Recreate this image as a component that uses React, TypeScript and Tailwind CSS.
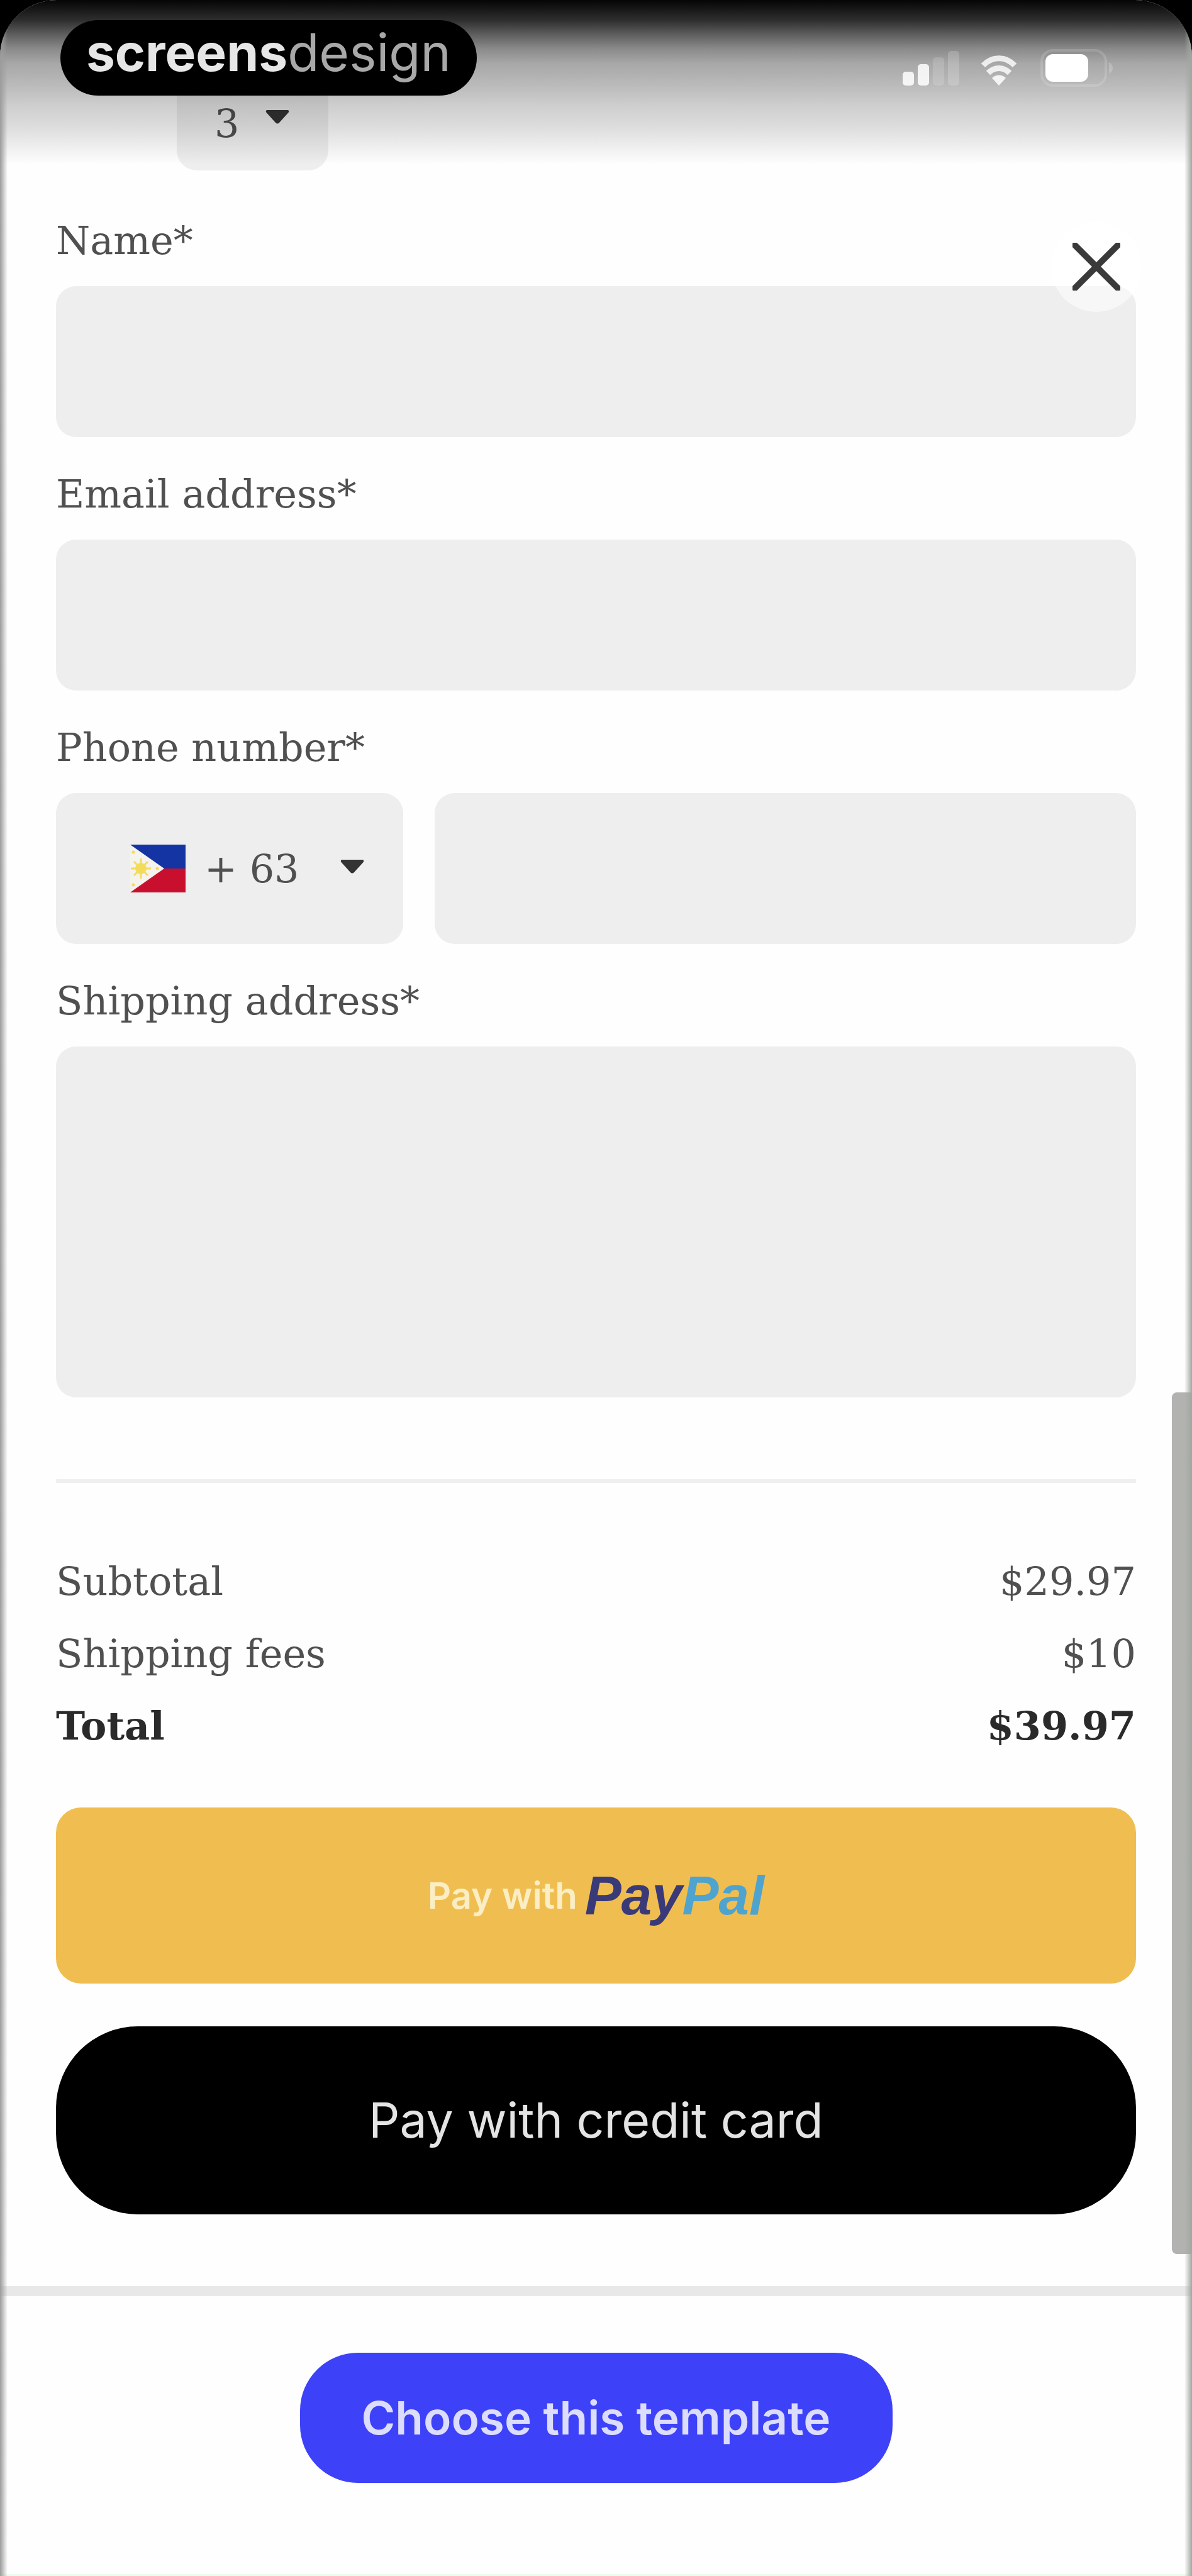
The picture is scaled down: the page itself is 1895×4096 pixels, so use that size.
import type { ReactNode } from "react";

const TEXT_FIELDS = [
  { id: "name", label: "Name*", type: "text" },
  { id: "email", label: "Email address*", type: "email" },
];

const TOTALS = [
  { label: "Subtotal", value: "$29.97", bold: false },
  { label: "Shipping fees", value: "$10", bold: false },
  { label: "Total", value: "$39.97", bold: true },
];

const FIELD = "block h-[240px] w-full rounded-[32px] bg-[#eeeeee] px-12 outline-none";

function Caret({ className }: { className: string }) {
  return (
    <svg viewBox="0 0 38 24" className={className} aria-hidden="true">
      <path d="M3 1h32c2 0 3 2 1.500 4L22 21c-2 2-4 2-6 0L1.500 5C0 3 1 1 3 1z" fill="#333333" />
    </svg>
  );
}

function PhFlag({ className }: { className: string }) {
  return (
    <svg viewBox="0 0 88 76" className={className} aria-hidden="true">
      <rect width="88" height="38" fill="#1434a4" />
      <rect y="38" width="88" height="38" fill="#c8102e" />
      <path d="M0 0l54 38L0 76z" fill="#f4f3ee" />
      <circle cx="17" cy="38" r="9" fill="#f3dc5c" />
      <g stroke="#f3dc5c" strokeWidth="3">
        <path d="M17 22v32M1 38h32M6 27l22 22M6 49l22-22" />
      </g>
      <circle cx="5" cy="12" r="2.500" fill="#f3dc5c" />
      <circle cx="5" cy="64" r="2.500" fill="#f3dc5c" />
      <circle cx="43" cy="38" r="2.500" fill="#f3dc5c" />
    </svg>
  );
}

function StatusIcons() {
  return (
    <svg viewBox="0 0 344 64" className="h-16 w-[344px]" aria-hidden="true">
      {/* signal */}
      <rect x="2" y="36" width="18" height="22" rx="5" fill="#fff" fillOpacity="0.85" />
      <rect x="26" y="24" width="18" height="34" rx="5" fill="#fff" fillOpacity="0.85" />
      <rect x="50" y="13" width="18" height="45" rx="5" fill="#fff" fillOpacity="0.15" />
      <rect x="74" y="3" width="18" height="55" rx="5" fill="#fff" fillOpacity="0.18" />
      {/* wifi */}
      <g fill="none" stroke="#fff" strokeOpacity="0.8" strokeWidth="9">
        <path d="M130 26c14-15 36-15 50 0" />
        <path d="M138 38c10-10 24-10 34 0" />
      </g>
      <path d="M155 58l-11-12c6-6 16-6 22 0z" fill="#fff" fillOpacity="0.85" />
      {/* battery */}
      <rect x="223" y="2" width="102" height="56" rx="18" fill="none" stroke="#fff" strokeOpacity="0.15" strokeWidth="4" />
      <rect x="229" y="8" width="68" height="44" rx="12" fill="#fff" />
      <path d="M330 21c8 3 8 15 0 18z" fill="#fff" fillOpacity="0.2" />
    </svg>
  );
}

function Field({ id, label, children }: { id: string; label: string; children: ReactNode }) {
  return (
    <div className="mb-[43px] flex flex-col gap-6">
      <label htmlFor={id} className="block self-start leading-[96px]">
        {label}
      </label>
      {children}
    </div>
  );
}

export default function App() {
  return (
    <div className="bg-black">
      <div className="relative overflow-hidden rounded-t-[90px] bg-[#fefefe] font-['DejaVu_Serif',serif] text-[62px] text-[#505050]">
        <main className="px-[89px] pb-[114px] pt-[121px]">
          <form onSubmit={(e) => e.preventDefault()}>
            <div className="relative mb-16 ml-48 h-[150px] w-[241px]">
              <select
                aria-label="Quantity"
                defaultValue="3"
                className="h-full w-full appearance-none rounded-[32px] bg-[#eeeeee] pl-[60px] outline-none"
              >
                <option>1</option>
                <option>2</option>
                <option>3</option>
              </select>
              <Caret className="pointer-events-none absolute right-[62px] top-[53px] h-6 w-[38px]" />
            </div>

            {TEXT_FIELDS.map((f) => (
              <Field key={f.id} id={f.id} label={f.label}>
                <input id={f.id} type={f.type} className={FIELD} />
              </Field>
            ))}

            <Field id="phone" label="Phone number*">
              <div className="flex gap-[50px]">
                <div className="relative w-[552px] shrink-0">
                  <select
                    aria-label="Country code"
                    defaultValue="63"
                    className="h-[240px] w-full appearance-none rounded-[32px] bg-[#eeeeee] pl-[236px] outline-none"
                  >
                    <option value="63">+ 63</option>
                    <option value="1">+ 1</option>
                    <option value="44">+ 44</option>
                  </select>
                  <PhFlag className="pointer-events-none absolute left-[118px] top-[82px] h-[76px] w-[88px]" />
                  <Caret className="pointer-events-none absolute right-[62px] top-[105px] h-6 w-[38px]" />
                </div>
                <div className="min-w-0 flex-1">
                  <input id="phone" type="tel" className={FIELD} />
                </div>
              </div>
            </Field>

            <div className="flex flex-col gap-6">
              <label htmlFor="address" className="block self-start leading-[96px]">
                Shipping address*
              </label>
              <textarea
                id="address"
                className="block h-[558px] w-full resize-none rounded-[32px] bg-[#eeeeee] p-12 outline-none"
              />
            </div>

            <hr className="mb-[99px] mt-[130px] border-0 border-t-6 border-[#efefef]" />

            <dl>
              {TOTALS.map((row) => (
                <div
                  key={row.label}
                  className={`flex justify-between leading-[115px] ${row.bold ? "font-bold text-[#2a2a2a]" : ""}`}
                >
                  <dt>{row.label}</dt>
                  <dd>{row.value}</dd>
                </div>
              ))}
            </dl>

            <button
              type="button"
              className="mt-[72px] flex h-[280px] w-full items-center justify-center gap-3 rounded-[40px] bg-[#f0be50]"
            >
              <span className="font-['Inter',sans-serif] text-[58px] font-semibold text-[#fbeec4]">Pay with</span>
              <span className="font-['Liberation_Sans',sans-serif] text-[87px] font-bold italic text-[#3a3a78]">
                Pay<span className="text-[#4fa3cf]">Pal</span>
              </span>
            </button>
            <button
              type="submit"
              className="mt-[68px] block h-[299px] w-full rounded-[130px] bg-black font-['Inter',sans-serif] text-[77px] text-[#e4e4e4]"
            >
              Pay with credit card
            </button>
          </form>
        </main>

        <footer className="border-t-16 border-[#e8e8e8] pb-[145px] pt-[90px] text-center">
          <button
            type="button"
            className="h-[207px] w-[942px] rounded-[92px] bg-[#3d42f8] font-['Inter',sans-serif] text-[73px] font-semibold text-[#dcdcfc]"
          >
            Choose this template
          </button>
        </footer>
        <div className="h-1.5 bg-[#eefced]" />

        {/* close button floats over the form */}
        <button
          type="button"
          aria-label="Close"
          className="absolute right-[80px] top-[352px] flex h-[144px] w-[144px] items-center justify-center rounded-full bg-white/50"
        >
          <svg viewBox="0 0 76 76" className="h-[76px] w-[76px]" aria-hidden="true">
            <path d="M4 4l68 68M72 4L4 72" stroke="#3a3a3a" strokeWidth="10" strokeLinecap="round" />
          </svg>
        </button>

        {/* status bar scrim */}
        <div className="pointer-events-none absolute inset-x-0 top-0 h-[264px] bg-[linear-gradient(to_bottom,rgba(0,0,0,0.98)_0px,rgba(0,0,0,0.82)_32px,rgba(0,0,0,0.67)_50px,rgba(0,0,0,0.46)_77px,rgba(0,0,0,0.34)_101px,rgba(0,0,0,0.27)_134px,rgba(0,0,0,0.19)_168px,rgba(0,0,0,0.13)_202px,rgba(0,0,0,0.06)_235px,rgba(0,0,0,0)_262px)]" />
        <div className="absolute inset-x-0 top-8 flex items-start justify-between pl-[96px] pr-[118px]">
          <p className="flex h-[120px] w-[662px] items-center justify-center rounded-full bg-black pb-4 font-['Inter',sans-serif] text-[82px] leading-none text-[#a8a8a8]">
            <span className="font-bold text-[#e6e6e6]">screens</span>design
          </p>
          <div className="mt-[46px]">
            <StatusIcons />
          </div>
        </div>

        {/* screen edges and scroll thumb */}
        <div className="pointer-events-none absolute inset-y-0 left-0 w-3 bg-linear-to-r from-[#9c9c9c] to-transparent" />
        <div className="pointer-events-none absolute bottom-[515px] right-0 h-[1370px] w-8 rounded-l-lg bg-[#b2b3b1]" />
        <div className="pointer-events-none absolute inset-y-0 right-0 w-3 bg-linear-to-l from-[#a0a8a0] to-transparent" />
      </div>
    </div>
  );
}
